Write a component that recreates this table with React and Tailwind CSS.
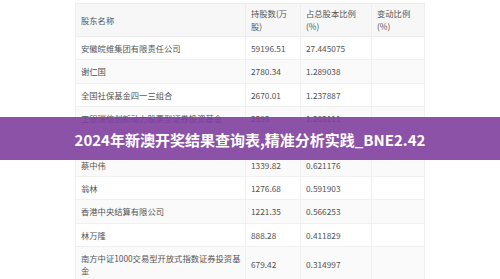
import React from 'react';

const rows = [
  ['安徽皖维集团有限责任公司', '59196.51', '27.445075', ''],
  ['谢仁国', '2780.34', '1.289038', ''],
  ['全国社保基金四一三组合', '2670.01', '1.237887', ''],
  ['工银瑞信创新动力股票型证券投资基金', '2595', '1.203111', ''],
  ['\u00a0', '', '', ''],
  ['蔡中伟', '1339.82', '0.621176', ''],
  ['翁林', '1276.68', '0.591903', ''],
  ['香港中央结算有限公司', '1221.35', '0.566253', ''],
  ['林万隆', '888.28', '0.411829', ''],
  ['南方中证1000交易型开放式指数证券投资基金', '679.42', '0.314997', ''],
];

export default function App() {
  return (
    <div
      className="relative w-[500px] h-[279px] overflow-hidden bg-white"
      style={{ fontFamily: '"Noto Sans CJK SC", "Noto Sans", sans-serif' }}
    >
      <div className="pl-[75px] pt-[3px]">
        <table className="w-[349px] table-fixed border-collapse text-[8.3px] leading-[12.33px] text-[#555]">
          <colgroup>
            <col className="w-[170px]" />
            <col className="w-[55px]" />
            <col className="w-[71px]" />
            <col className="w-[53px]" />
          </colgroup>
          <thead>
            <tr className="bg-[#f7f7f7]">
              <th className="border border-[#eeeeee] px-[5px] py-[3px] text-left font-normal align-middle leading-[13px]">股东名称</th>
              <th className="border border-[#eeeeee] px-[5px] py-[3px] text-left font-normal align-middle leading-[13px]">持股数(万股)</th>
              <th className="border border-[#eeeeee] px-[5px] py-[3px] text-left font-normal align-middle leading-[13px]">占总股本比例(%)</th>
              <th className="border border-[#eeeeee] px-[5px] py-[3px] text-left font-normal align-middle leading-[13px]">变动比例(%)</th>
            </tr>
          </thead>
          <tbody>
            {rows.map((r, i) => (
              <tr key={i} className={i % 2 === 1 ? 'bg-[#fafafa]' : 'bg-white'}>
                <td className="border border-[#f0f0f0] pl-[5px] pr-[1px] py-[5px] align-middle">{r[0]}</td>
                <td className="border border-[#f0f0f0] px-[5px] py-[5px] align-middle">{r[1]}</td>
                <td className="border border-[#f0f0f0] px-[5px] py-[5px] align-middle">{r[2]}</td>
                <td className="border border-[#f0f0f0] px-[5px] py-[5px] align-middle">{r[3]}</td>
              </tr>
            ))}
          </tbody>
        </table>
      </div>

      {/* title banner over the table */}
      <div className="absolute left-0 right-0 top-[117px] h-[43px] flex items-center justify-center pt-[4px] bg-[#7e3f9e]/90">
        <span className="text-white font-bold text-[15px]">
          2024年新澳开奖结果查询表,精准分析实践_BNE2.42
        </span>
      </div>
    </div>
  );
}
